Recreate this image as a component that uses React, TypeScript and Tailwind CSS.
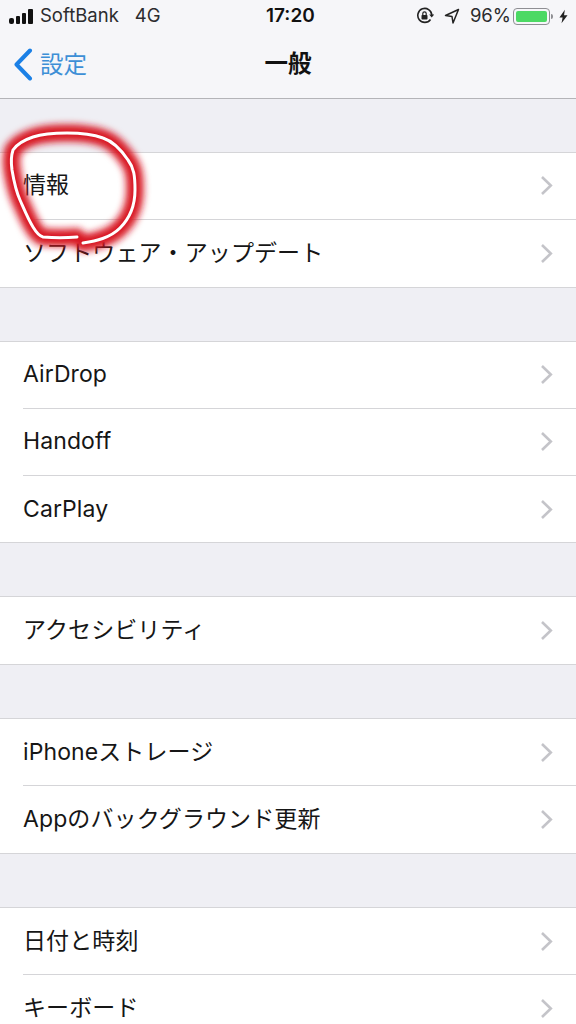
const font = '[font-family:Inter,"Noto_Sans_CJK_JP",sans-serif]'

const groups = [
  ['情報', 'ソフトウェア・アップデート'],
  ['AirDrop', 'Handoff', 'CarPlay'],
  ['アクセシビリティ'],
  ['iPhoneストレージ', 'Appのバックグラウンド更新'],
  ['日付と時刻', 'キーボード'],
]

const Chevron = () => {
  return (
    <svg width="13" height="21" viewBox="0 0 13 21">
      <path d="M2 2l8.8 8.5L2 19" fill="none" stroke="#c4c4c9" strokeWidth="2.6" />
    </svg>
  )
}

const Row = ({ label, last }: { label: string; last: boolean }) => {
  return (
    <div className="flex h-[66.9px] bg-white pl-[23px]">
      <div
        className={`flex flex-1 items-center justify-between pr-[23px] ${last ? '' : 'border-b border-[#d5d5d8]'}`}
      >
        <span className="text-[23px] leading-none tracking-[0.1px] text-[#161616]">{label}</span>
        <Chevron />
      </div>
    </div>
  )
}

const Group = ({ rows }: { rows: string[] }) => {
  return (
    <div className="border-y border-[#d5d5d8]">
      {rows.map((r, i) => (
        <Row key={r} label={r} last={i === rows.length - 1} />
      ))}
    </div>
  )
}

const StatusBar = () => {
  return (
    <div className="flex h-[32px] items-center pl-[9px] pr-[8px] text-[#2c2c2e]">
      <div className="flex w-[257px] items-center">
        <div className="flex items-end gap-[2px]">
          <span className="h-[6px] w-[5px] rounded-[2px] bg-[#111]" />
          <span className="h-[8px] w-[4px] rounded-[1px] bg-[#111]" />
          <span className="h-[11px] w-[4px] rounded-[1px] bg-[#111]" />
          <span className="h-[15px] w-[5px] rounded-[1px] bg-[#111]" />
        </div>
        <span className="ml-[7px] text-[18.5px]">SoftBank</span>
        <span className="ml-[16px] text-[18.5px]">4G</span>
      </div>
      <span className="text-[19px] font-semibold text-[#111]">17:20</span>
      <div className="flex flex-1 items-center justify-end">
        <svg width="18" height="18" viewBox="0 0 18 18" className="mr-[10px]">
          <path d="M14.5 12.5A7 7 0 1 1 15.8 8" fill="none" stroke="#222" strokeWidth="1.6" />
          <path d="M13.2 7.5h5l-2.5 3z" fill="#222" />
          <rect x="5.5" y="8" width="6" height="4.5" rx="0.8" fill="#222" />
          <path d="M6.8 8V6.6a1.7 1.7 0 0 1 3.4 0V8" fill="none" stroke="#222" strokeWidth="1.2" />
        </svg>
        <svg width="16" height="16" viewBox="0 0 16 16" className="mr-[10px]">
          <path d="M14.5 1.5 1.5 7.5l6.5 1 1 6.5z" fill="none" stroke="#222" strokeWidth="1.5" strokeLinejoin="round" />
        </svg>
        <span className="text-[18.5px]">96%</span>
        <div className="ml-[2px] h-[17px] w-[37px] rounded-[4px] border border-[#8e8e93] p-[2px]">
          <div className="h-full w-full rounded-[2px] bg-[#4cd964]" />
        </div>
        <span className="ml-[1px] h-[5px] w-[2px] rounded-r-sm bg-[#8e8e93]" />
        <svg width="9" height="15" viewBox="0 0 10 15" className="ml-[6px]">
          <path d="M6.5 0 0.5 8.5h3.5L2.8 15 9.5 6H5.6z" fill="#222" />
        </svg>
      </div>
    </div>
  )
}

const NavBar = () => {
  return (
    <div className="relative flex h-[67px] items-start justify-center border-b border-[#b4b4b8] pt-[15px]">
      <div className="absolute left-[13px] top-[16px] flex items-center">
        <svg width="20" height="33" viewBox="0 0 20 33">
          <path d="M17 2.5 3.5 16.5 17 30.5" fill="none" stroke="#1b80e6" strokeWidth="4" strokeLinecap="round" strokeLinejoin="round" />
        </svg>
        <span className="ml-[7px] text-[23.5px] leading-none text-[#3d8fd6]">設定</span>
      </div>
      <span className="text-[23.5px] font-bold leading-[34px] text-[#111]">一般</span>
    </div>
  )
}

const scribble =
  'M83 243C96 241 110 238 120 228C130 218 135 204 135 190C135 176 134 168 128 160C120 148 112 141 103 138C92 134 80 133 67 133C52 133 42 134 33 137C24 140 17 144 13 150C11 156 11 163 12 170C14 182 16 191 20 200C24 209 28 219 33 227C36 232 39 236 43 237C54 238 66 238 77 237'

export default function App() {
  return (
    <div className={`relative h-[1024px] w-[576px] overflow-hidden bg-[#efeff4] ${font}`}>
      <div className="bg-[#f6f6f9]">
        <StatusBar />
        <NavBar />
      </div>
      <div className="flex flex-col gap-[53px] pt-[53px]">
        {groups.map((g) => (
          <Group key={g[0]} rows={g} />
        ))}
      </div>
      <svg className="absolute left-0 top-0" width="576" height="300" viewBox="0 0 576 300">
        <defs>
          <filter id="glow" x="-30%" y="-30%" width="160%" height="160%">
            <feGaussianBlur stdDeviation="3.5" />
          </filter>
        </defs>
        <path d={scribble} fill="none" stroke="#d81420" strokeWidth="17" strokeLinecap="round" filter="url(#glow)" />
        <path d={scribble} fill="none" stroke="#fff" strokeWidth="3" strokeLinecap="round" />
      </svg>
    </div>
  )
}
